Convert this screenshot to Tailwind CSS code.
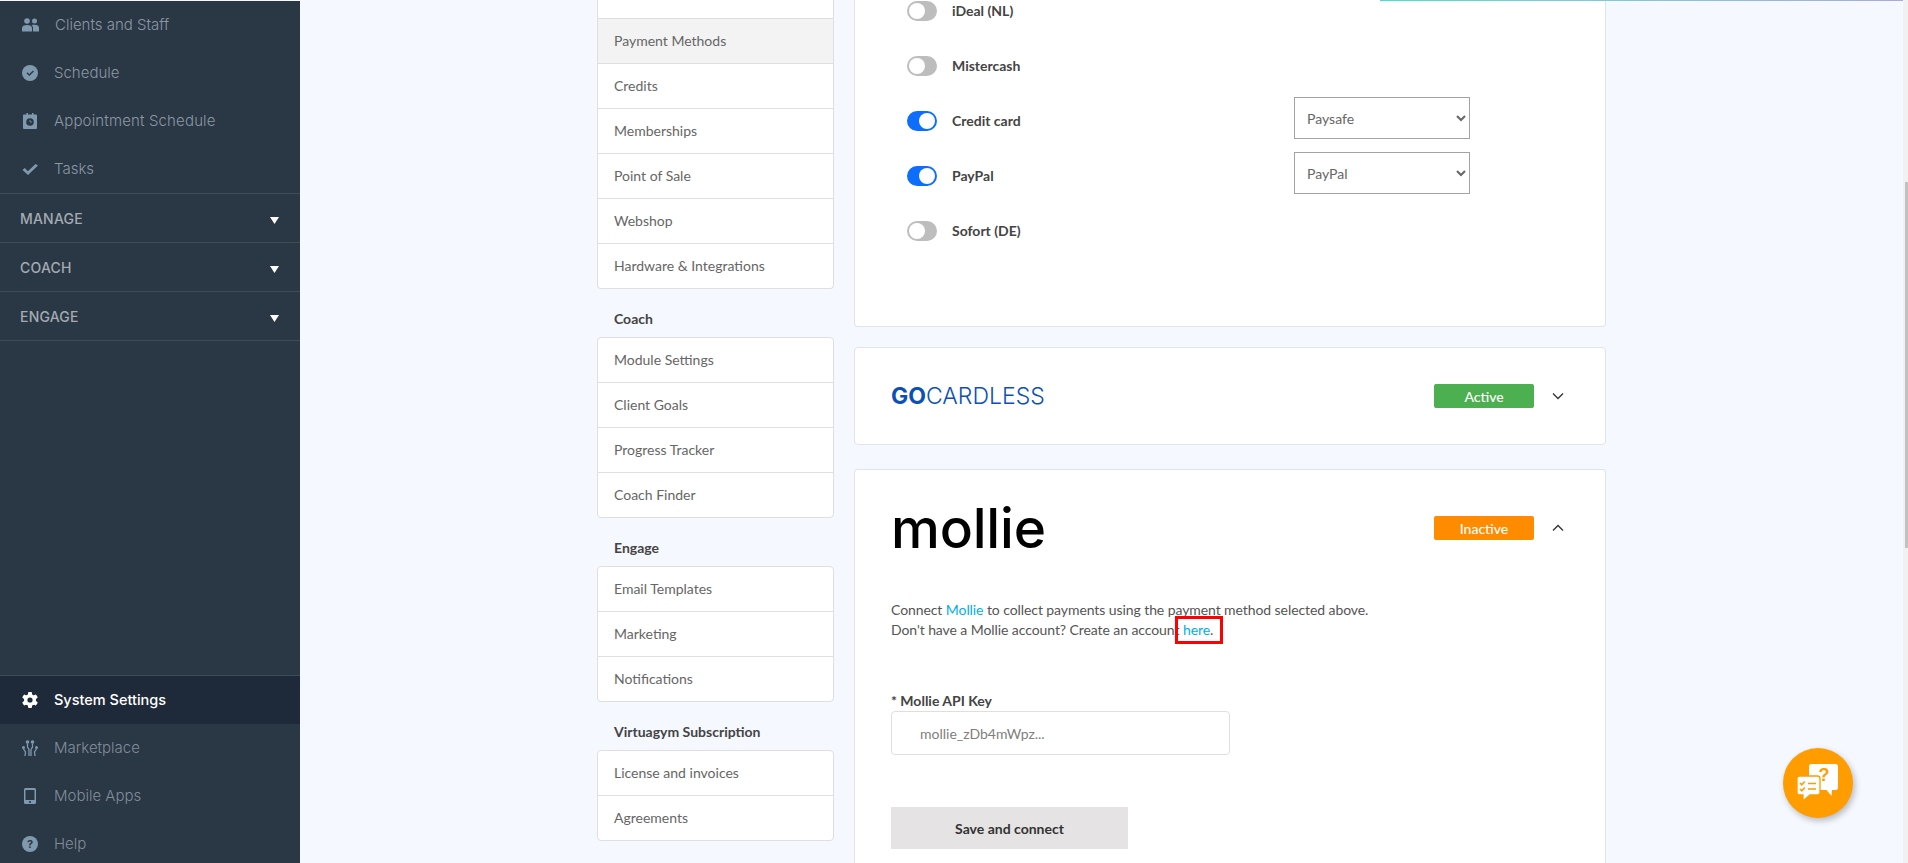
<!DOCTYPE html>
<html lang="en">
<head>
    <meta charset="UTF-8">
    <meta name="viewport" content="width=device-width, initial-scale=1.0">
    <title>Payment Methods</title>
    <script src="https://cdn.jsdelivr.net/npm/@tailwindcss/browser@4"></script>
</head>
<body class="overflow-hidden bg-[#f5f8ff]">
<div class="relative flex h-[863px] w-[1908px] overflow-hidden font-['Lato','Open_Sans',sans-serif]">

    <!-- Sidebar -->
    <aside class="flex h-full w-[300px] shrink-0 flex-col overflow-hidden border-t border-[#f5f8ff] bg-[#2a3744] font-['Inter',sans-serif] text-[15px] text-[#8b98a5]">
        <a class="flex h-12 shrink-0 items-center gap-4 pl-[22px]">
            <svg class="h-4 w-[17px]" viewBox="0 0 17 14" fill="#7f9aae"><circle cx="5" cy="3" r="2.8"/><circle cx="12.5" cy="3" r="2.5"/><path d="M0 13.5V10c0-2 2-3 5-3s5 1 5 3v3.5z"/><path d="M11 13.5V10c0-1.300-.6-2.300-1.500-3 .8-.2 1.800-.3 3-.3 2.800 0 4.500 1 4.500 3v3.800z"/></svg>
            <span class="font-light">Clients and Staff</span>
        </a>
        <a class="flex h-12 shrink-0 items-center gap-4 pl-[22px]">
            <svg class="h-4 w-4" viewBox="0 0 16 16"><circle cx="8" cy="8" r="8" fill="#7f9aae"/><path d="M5 7.800l2.300 2.200L11.500 6" fill="none" stroke="#2a3744" stroke-width="1.300"/></svg>
            <span class="font-light">Schedule</span>
        </a>
        <a class="flex h-12 shrink-0 items-center gap-4 pl-[22px]">
            <svg class="h-4 w-4" viewBox="0 0 16 16"><path d="M2 1.500h2.500V0H6v1.500h4V0h1.500v1.500H14a1 1 0 0 1 1 1V15a1 1 0 0 1-1 1H2a1 1 0 0 1-1-1V2.500a1 1 0 0 1 1-1z" fill="#7f9aae"/><circle cx="8" cy="9" r="3.800" fill="#2a3744"/><path d="M8 7v2h2" stroke="#7f9aae" fill="none" stroke-width=".8"/></svg>
            <span class="font-light tracking-[0.15px]">Appointment Schedule</span>
        </a>
        <a class="flex h-12 shrink-0 items-center gap-4 pl-[22px]">
            <svg class="h-4 w-4" viewBox="0 0 16 16"><path d="M.5 9l2.300-2 3 3.200L13.500 3 16 4.500 6 14z" fill="#7f9aae"/></svg>
            <span class="font-light">Tasks</span>
        </a>

        <div class="shrink-0 border-t border-[#3e4c5a] text-[14px] font-medium tracking-[0.2px] text-[#a3abb3]">
            <div class="flex h-[49px] items-center justify-between border-b border-[#3e4c5a] pr-[21px] pl-5">
                <span>MANAGE</span>
                <svg class="mt-[4px] h-[7px] w-[9px]" viewBox="0 0 9 7" fill="#fff"><path d="M0 0h9L4.500 7z"/></svg>
            </div>
            <div class="flex h-[49px] items-center justify-between border-b border-[#3e4c5a] pr-[21px] pl-5">
                <span>COACH</span>
                <svg class="mt-[4px] h-[7px] w-[9px]" viewBox="0 0 9 7" fill="#fff"><path d="M0 0h9L4.500 7z"/></svg>
            </div>
            <div class="flex h-[49px] items-center justify-between border-b border-[#3e4c5a] pr-[21px] pl-5">
                <span>ENGAGE</span>
                <svg class="mt-[4px] h-[7px] w-[9px]" viewBox="0 0 9 7" fill="#fff"><path d="M0 0h9L4.500 7z"/></svg>
            </div>
        </div>

        <div class="mt-[334px] shrink-0 border-t border-[#3e4c5a]">
            <a class="flex h-12 items-center gap-4 bg-[#1e2939] pl-[22px] font-medium text-white">
                <svg class="h-4 w-4" viewBox="0 0 16 16"><g fill="#fff"><rect x="6" y="0" width="4" height="16" rx="1"/><rect x="6" y="0" width="4" height="16" rx="1" transform="rotate(60 8 8)"/><rect x="6" y="0" width="4" height="16" rx="1" transform="rotate(120 8 8)"/><circle cx="8" cy="8" r="6"/></g><circle cx="8" cy="8" r="2.600" fill="#1e2939"/></svg>
                <span class="text-[14.5px]">System Settings</span>
            </a>
            <a class="flex h-12 items-center gap-4 pl-[22px] text-[#808d99]">
                <svg class="h-4 w-4" viewBox="0 0 16 16" fill="none" stroke="#7f9aae" stroke-width="1.300"><circle cx="5.500" cy="2" r="1.800" fill="#7f9aae" stroke="none"/><circle cx="10.500" cy="2" r="1.800" fill="#7f9aae" stroke="none"/><circle cx="1.500" cy="7.500" r="1.500" fill="#7f9aae" stroke="none"/><circle cx="14.500" cy="7.500" r="1.500" fill="#7f9aae" stroke="none"/><path d="M5.500 3.500V7L7 9.500V16M10.500 3.500V7L9 9.500V16M1.500 9L3.500 12 3 16M14.500 9L12.500 12 13 16"/></svg>
                <span class="font-light">Marketplace</span>
            </a>
            <a class="flex h-12 items-center gap-4 pl-[22px] text-[#808d99]">
                <svg class="h-4 w-4" viewBox="0 0 16 16"><rect x="2" y="0" width="12" height="16" rx="1.500" fill="#7f9aae"/><rect x="3.500" y="2" width="9" height="10" fill="#2a3744"/><rect x="7" y="13.200" width="2" height="1.600" fill="#2a3744"/></svg>
                <span class="font-light">Mobile Apps</span>
            </a>
            <a class="flex h-12 items-center gap-4 pl-[22px] text-[#808d99]">
                <span class="flex h-4 w-4 items-center justify-center rounded-full bg-[#7f9aae] text-[11px] font-bold text-[#2a3744]">?</span>
                <span class="font-light">Help</span>
            </a>
        </div>
    </aside>

    <!-- Page content, scrolled down -->
    <main class="flex min-w-0 flex-1 gap-5 pl-[297px] text-[14px] text-[#666]">
        <!-- Settings menu -->
        <nav class="w-[237px] shrink-0">
            <div class="rounded-b-[4px] border-x border-b border-[#dfdfdf] bg-white">
                <div class="h-[19px] border-b border-[#dfdfdf]"></div>
                <div class="flex h-[45px] items-center border-b border-[#dfdfdf] bg-[#f3f3f3] pb-[2px] pl-4">Payment Methods</div>
                <div class="flex h-[45px] items-center border-b border-[#dfdfdf] pb-[2px] pl-4">Credits</div>
                <div class="flex h-[45px] items-center border-b border-[#dfdfdf] pb-[2px] pl-4">Memberships</div>
                <div class="flex h-[45px] items-center border-b border-[#dfdfdf] pb-[2px] pl-4">Point of Sale</div>
                <div class="flex h-[45px] items-center border-b border-[#dfdfdf] pb-[2px] pl-4">Webshop</div>
                <div class="flex h-[44px] items-center pb-[2px] pl-4">Hardware &amp; Integrations</div>
            </div>

            <h3 class="h-[48px] pt-5 pl-[17px] leading-5 font-bold text-[#444]">Coach</h3>
            <div class="rounded-[4px] border border-[#dfdfdf] bg-white">
                <div class="flex h-[45px] items-center border-b border-[#dfdfdf] pb-[2px] pl-4">Module Settings</div>
                <div class="flex h-[45px] items-center border-b border-[#dfdfdf] pb-[2px] pl-4">Client Goals</div>
                <div class="flex h-[45px] items-center border-b border-[#dfdfdf] pb-[2px] pl-4">Progress Tracker</div>
                <div class="flex h-[44px] items-center pb-[2px] pl-4">Coach Finder</div>
            </div>

            <h3 class="h-[48px] pt-5 pl-[17px] leading-5 font-bold text-[#444]">Engage</h3>
            <div class="rounded-[4px] border border-[#dfdfdf] bg-white">
                <div class="flex h-[45px] items-center border-b border-[#dfdfdf] pb-[2px] pl-4">Email Templates</div>
                <div class="flex h-[45px] items-center border-b border-[#dfdfdf] pb-[2px] pl-4">Marketing</div>
                <div class="flex h-[44px] items-center pb-[2px] pl-4">Notifications</div>
            </div>

            <h3 class="h-[48px] pt-5 pl-[17px] leading-5 font-bold text-[#444]">Virtuagym Subscription</h3>
            <div class="rounded-[4px] border border-[#dfdfdf] bg-white">
                <div class="flex h-[45px] items-center border-b border-[#dfdfdf] pb-[2px] pl-4">License and invoices</div>
                <div class="flex h-[44px] items-center pb-[2px] pl-4">Agreements</div>
            </div>
        </nav>

        <!-- Payment provider cards -->
        <section class="-mt-[17px] w-[752px] shrink-0">
            <div class="rounded-b-[4px] border-x border-b border-[#dfe3ea] bg-white pb-[68px] pl-[52px]">
                <div class="grid h-[55px] grid-cols-[387px_176px] items-center">
                    <div class="flex items-center gap-[15px] font-bold text-[#444]">
                        <span class="flex h-5 w-[30px] items-center rounded-full bg-[#bdbdbd] px-[2px]"><span class="h-4 w-4 rounded-full bg-white"></span></span>
                        iDeal (NL)
                    </div>
                </div>
                <div class="grid h-[55px] grid-cols-[387px_176px] items-center">
                    <div class="flex items-center gap-[15px] font-bold text-[#444]">
                        <span class="flex h-5 w-[30px] items-center rounded-full bg-[#bdbdbd] px-[2px]"><span class="h-4 w-4 rounded-full bg-white"></span></span>
                        Mistercash
                    </div>
                </div>
                <div class="grid h-[55px] grid-cols-[387px_176px] items-center">
                    <div class="flex items-center gap-[15px] font-bold text-[#444]">
                        <span class="flex h-5 w-[30px] items-center justify-end rounded-full bg-[#0d6efd] px-[2px]"><span class="h-4 w-4 rounded-full bg-white"></span></span>
                        Credit card
                    </div>
                    <select class="-mt-[6px] h-[42px] w-[176px] border border-[#a3a3a3] bg-white px-2 pt-[2px] text-[#666]"><option>Paysafe</option></select>
                </div>
                <div class="grid h-[55px] grid-cols-[387px_176px] items-center">
                    <div class="flex items-center gap-[15px] font-bold text-[#444]">
                        <span class="flex h-5 w-[30px] items-center justify-end rounded-full bg-[#0d6efd] px-[2px]"><span class="h-4 w-4 rounded-full bg-white"></span></span>
                        PayPal
                    </div>
                    <select class="-mt-[6px] h-[42px] w-[176px] border border-[#a3a3a3] bg-white px-2 pt-[2px] text-[#666]"><option>PayPal</option></select>
                </div>
                <div class="grid h-[55px] grid-cols-[387px_176px] items-center">
                    <div class="flex items-center gap-[15px] font-bold text-[#444]">
                        <span class="flex h-5 w-[30px] items-center rounded-full bg-[#bdbdbd] px-[2px]"><span class="h-4 w-4 rounded-full bg-white"></span></span>
                        Sofort (DE)
                    </div>
                </div>
            </div>

            <div class="mt-5 flex h-[98px] items-center rounded-[4px] border border-[#dfe3ea] bg-white pr-[37px] pl-9">
                <span class="w-[153px] font-['Inter',sans-serif] text-[23px] whitespace-nowrap text-[#0b51b5]"><b class="font-bold">GO</b><span class="font-light">CARDLESS</span></span>
                <span class="ml-auto flex h-6 w-[100px] items-center justify-center rounded-[2px] bg-[#4caf50] font-medium text-white">Active</span>
                <svg class="ml-[14px] h-5 w-5" viewBox="0 0 20 20" fill="none" stroke="#333" stroke-width="1.300"><path d="M5 7.500l5 5 5-5"/></svg>
            </div>

            <div class="mt-6 rounded-t-[4px] border-x border-t border-[#dfe3ea] bg-white pt-9 pr-[37px] pb-10 pl-9">
                <div class="flex h-11 items-center">
                    <span class="w-[153px] font-['Inter',sans-serif] text-[55px] leading-none font-medium tracking-[-0.2px] text-black">mollie</span>
                    <span class="ml-auto flex h-6 w-[100px] items-center justify-center rounded-[2px] bg-[#ff8c00] font-medium text-white">Inactive</span>
                    <svg class="ml-[14px] h-5 w-5" viewBox="0 0 20 20" fill="none" stroke="#333" stroke-width="1.300"><path d="M5 12.500l5-5 5 5"/></svg>
                </div>
                <p class="mt-[50px] leading-5 tracking-[-0.08px] text-[#555]">
                    Connect <a class="text-[#00aeef]">Mollie</a> to collect payments using the payment method selected above.<br>
                    Don't have a Mollie account? Create an account <span class="relative"><a class="text-[#00aeef]">here</a>.<span class="absolute top-1/2 -right-[10px] -left-[8px] h-[28px] -translate-y-1/2 border-[3px] border-[#f00]"></span></span>
                </p>
                <label class="mt-[51px] block leading-5 font-bold text-[#444]">* Mollie API Key</label>
                <div class="flex h-11 w-[339px] items-center rounded-[4px] border border-[#dfdfdf] bg-white pl-7 text-[#808080]">mollie_zDb4mWpz...</div>
                <button class="mt-[52px] h-[42px] w-[237px] bg-[#e5e3e3] font-bold text-[#333]">Save and connect</button>
            </div>
        </section>
    </main>

    <!-- Scrollbar -->
    <div class="absolute top-0 right-0 h-full w-[5px] bg-[#f1f1f1] pt-[182px] pl-[2px]">
        <div class="h-[366px] bg-[#c1c1c1]"></div>
    </div>

    <!-- Loading bar at the top -->
    <div class="absolute top-0 right-[5px] left-[1380px] h-px bg-linear-to-r from-[#40e0d0] to-[#a9a9e3]"></div>

    <!-- Support chat button -->
    <button class="absolute top-[748px] left-[1783px] h-[70px] w-[70px] rounded-full bg-[#ff9c00] shadow-[2px_3px_6px_rgba(0,0,0,0.25)]">
        <svg class="h-[70px] w-[70px]" viewBox="0 0 70 70">
            <path d="M28.500 16h24a2.500 2.500 0 0 1 2.500 2.500v21a2.500 2.500 0 0 1-2.500 2.500H49l-.5 6-5-6H28.500a2.500 2.500 0 0 1-2.500-2.500v-21a2.500 2.500 0 0 1 2.500-2.500z" fill="#fff"/>
            <text x="41" y="33" font-size="18" font-weight="700" font-family="Liberation Sans, sans-serif" text-anchor="middle" fill="#ff9c00">?</text>
            <path d="M16.500 28h18a2.500 2.500 0 0 1 2.500 2.500v14a2.500 2.500 0 0 1-2.500 2.500H27l-7 6v-6h-3.500a2.500 2.500 0 0 1-2.500-2.500v-14a2.500 2.500 0 0 1 2.500-2.500z" fill="#fff" stroke="#ff9c00" stroke-width="1.300"/>
            <path d="M17 35l1.800 1.800 3-3.300M17 41l1.800 1.800 3-3.300M25 35.500h8M25 41h8" fill="none" stroke="#ff9c00" stroke-width="1.600"/>
        </svg>
    </button>
</div>
</body>
</html>
